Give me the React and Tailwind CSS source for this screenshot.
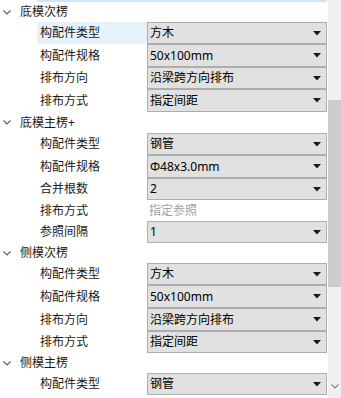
import React from "react";

const sections = [
  {
    title: "底模次楞",
    h: 20,
    rows: [
      { label: "构配件类型", value: "方木", h: 22, active: true },
      { label: "构配件规格", value: "50x100mm", h: 23 },
      { label: "排布方向", value: "沿梁跨方向排布", h: 22 },
      { label: "排布方式", value: "指定间距", h: 23 }
    ]
  },
  {
    title: "底模主楞+",
    h: 21,
    rows: [
      { label: "构配件类型", value: "钢管", h: 22 },
      { label: "构配件规格", value: "Φ48x3.0mm", h: 23 },
      { label: "合并根数", value: "2", h: 22 },
      { label: "排布方式", value: "指定参照", h: 21, disabled: true },
      { label: "参照间隔", value: "1", h: 22 }
    ]
  },
  {
    title: "侧模次楞",
    h: 20,
    rows: [
      { label: "构配件类型", value: "方木", h: 22 },
      { label: "构配件规格", value: "50x100mm", h: 23 },
      { label: "排布方向", value: "沿梁跨方向排布", h: 23 },
      { label: "排布方式", value: "指定间距", h: 22 }
    ]
  },
  {
    title: "侧模主楞",
    h: 20,
    rows: [{ label: "构配件类型", value: "钢管", h: 22 }]
  }
];

function Arrow() {
  return (
    <svg width="8" height="5" viewBox="0 0 8 5" className="shrink-0">
      <polygon points="0,0 8,0 4,4.5" fill="#1a1a1a" />
    </svg>
  );
}

function Row({ row }) {
  return (
    <div className="flex" style={{ height: row.h }}>
      <div
        className={
          "ml-[37px] w-[110px] pl-[3px] flex items-center text-[#1a1a1a] " +
          (row.active ? "bg-[#e5f1fb]" : "")
        }
      >
        {row.label}
      </div>
      {row.disabled ? (
        <div className="flex-1 flex items-center pl-[2px] text-[#a0a0a0]">
          {row.value}
        </div>
      ) : (
        <div className="flex-1 flex items-center justify-between pl-[2px] pr-[5px] bg-[#e1e1e1] border border-[#adadad] text-black">
          <span>{row.value}</span>
          <Arrow />
        </div>
      )}
    </div>
  );
}

export default function App() {
  return (
    <div
      className="w-[341px] h-[398px] flex bg-white overflow-hidden text-[12px] leading-none"
      style={{ fontFamily: '"Noto Sans", "Noto Sans CJK SC", sans-serif' }}
    >
      <div className="w-[328px] flex flex-col pr-[1px]">
        <div className="h-[2px] ml-[37px] bg-[#cce8ff] shrink-0" />
        {sections.map((s) => (
          <div key={s.title} className="flex flex-col shrink-0">
            <div className="flex items-center" style={{ height: s.h }}>
              <svg width="8" height="5" viewBox="0 0 8 5" className="ml-[3px] mr-[9px]">
                <polyline points="0.5,0.5 4,4 7.5,0.5" fill="none" stroke="#606060" strokeWidth="1.2" />
              </svg>
              <span className="text-[#1a1a1a]">{s.title}</span>
            </div>
            {s.rows.map((r, i) => (
              <Row key={i} row={r} />
            ))}
          </div>
        ))}
      </div>
      <div className="w-[13px] bg-[#f0f0f0] flex flex-col items-center">
        <div className="h-[100px] shrink-0" />
        <div className="h-[187px] w-full bg-[#cdcdcd] shrink-0" />
        <div className="flex-1" />
        <div className="h-[17px] flex items-start justify-center pt-[6px] shrink-0 mb-[3px]">
          <svg width="8" height="5" viewBox="0 0 8 5">
            <polyline points="0.5,0.5 4,4 7.5,0.5" fill="none" stroke="#858585" strokeWidth="1.2" />
          </svg>
        </div>
      </div>
    </div>
  );
}
